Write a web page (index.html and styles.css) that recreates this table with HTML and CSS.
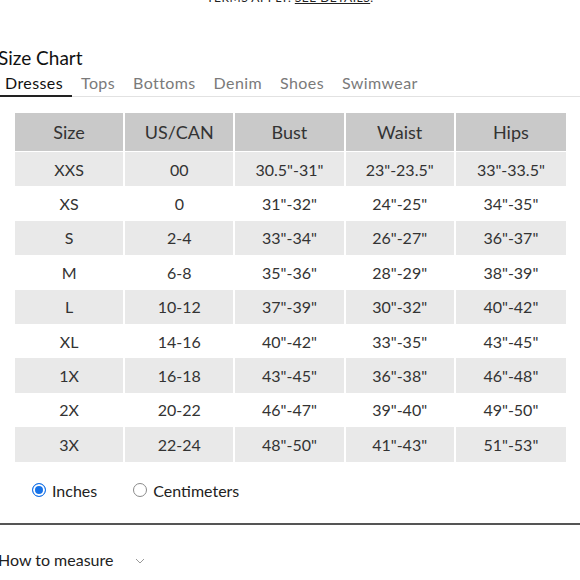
FILE: index.html
```html
<!DOCTYPE html>
<html>
<head>
<meta charset="utf-8">
<link rel="stylesheet" href="styles.css">
</head>
<body>
<div class="notice">TERMS APPLY. <a class="notice-link">SEE DETAILS</a>.</div>
<section class="chart">
  <h2 class="title">Size Chart</h2>
  <nav class="tabs">
    <span class="tab active">Dresses</span>
    <span class="tab">Tops</span>
    <span class="tab">Bottoms</span>
    <span class="tab">Denim</span>
    <span class="tab">Shoes</span>
    <span class="tab">Swimwear</span>
  </nav>
  <table class="sizes">
    <thead>
      <tr><th>Size</th><th>US/CAN</th><th>Bust</th><th>Waist</th><th>Hips</th></tr>
    </thead>
    <tbody>
      <tr><td>XXS</td><td>00</td><td>30.5"-31"</td><td>23"-23.5"</td><td>33"-33.5"</td></tr>
      <tr><td>XS</td><td>0</td><td>31"-32"</td><td>24"-25"</td><td>34"-35"</td></tr>
      <tr><td>S</td><td>2-4</td><td>33"-34"</td><td>26"-27"</td><td>36"-37"</td></tr>
      <tr><td>M</td><td>6-8</td><td>35"-36"</td><td>28"-29"</td><td>38"-39"</td></tr>
      <tr><td>L</td><td>10-12</td><td>37"-39"</td><td>30"-32"</td><td>40"-42"</td></tr>
      <tr><td>XL</td><td>14-16</td><td>40"-42"</td><td>33"-35"</td><td>43"-45"</td></tr>
      <tr><td>1X</td><td>16-18</td><td>43"-45"</td><td>36"-38"</td><td>46"-48"</td></tr>
      <tr><td>2X</td><td>20-22</td><td>46"-47"</td><td>39"-40"</td><td>49"-50"</td></tr>
      <tr><td>3X</td><td>22-24</td><td>48"-50"</td><td>41"-43"</td><td>51"-53"</td></tr>
    </tbody>
  </table>
  <div class="units">
    <label class="unit"><span class="radio checked"></span>Inches</label>
    <label class="unit"><span class="radio"></span>Centimeters</label>
  </div>
</section>
<hr class="divider">
<div class="measure">How to measure <span class="chev"><svg width="10" height="6" viewBox="0 0 10 6"><path d="M1 1 L5 5 L9 1" fill="none" stroke="#999" stroke-width="1"/></svg></span></div>
</body>
</html>
```
FILE: styles.css
```css
html, body {
  margin: 0;
  padding: 0;
  background: #fff;
}
body {
  font-family: Lato, "Noto Sans", sans-serif;
  color: #222;
  width: 580px;
  overflow: hidden;
}
.notice {
  text-align: center;
  font-size: 12px;
  line-height: 12px;
  letter-spacing: 0.5px;
  margin-top: -8px;
  color: #222;
}
.notice-link {
  text-decoration: underline;
}
.chart {
  margin-left: -2px;
}
.title {
  margin: 42px 0 0 0;
  font-size: 19px;
  font-weight: 400;
  line-height: 24px;
  color: #111;
}
.tabs {
  display: flex;
  margin-top: 3px;
  border-bottom: 1px solid #e2e2e2;
  width: 582px;
}
.tab {
  font-size: 16px;
  line-height: 20px;
  color: #7a7a7a;
  padding: 0 9px 2px 9px;
  letter-spacing: 0.4px;
}
.tab:first-child {
  padding-left: 7px;
}
.tab.active {
  color: #111;
  border-bottom: 2px solid #222;
  margin-bottom: -1px;
}
.sizes {
  margin: 16px 0 0 17px;
  border-collapse: separate;
  border-spacing: 0;
  table-layout: fixed;
  width: 551px;
}
.sizes th, .sizes td {
  text-align: center;
  border-right: 2px solid #fff;
  padding: 0;
  color: #333;
}
.sizes th:last-child, .sizes td:last-child {
  border-right: none;
}
.sizes th {
  background: #c9c9c9;
  font-size: 18px;
  font-weight: 400;
  height: 38px;
  border-bottom: 1px solid #fff;
}
.sizes td {
  font-size: 16px;
  height: 34.4px;
}
.sizes tbody tr:nth-child(odd) td {
  background: #e9e9e9;
}
.units {
  display: flex;
  align-items: center;
  margin: 19px 0 0 34px;
  gap: 36px;
}
.unit {
  display: flex;
  align-items: center;
  gap: 6px;
  font-size: 16px;
  color: #222;
}
.radio {
  width: 14px;
  height: 14px;
  border-radius: 50%;
  border: 1px solid #8a8a8a;
  box-sizing: border-box;
  background: #fff;
}
.radio.checked {
  border: 1.5px solid #1672e8;
  background: #1672e8;
  box-shadow: inset 0 0 0 2px #fff;
}
.divider {
  margin: 23px 0 0 0;
  border: none;
  height: 2px;
  background: #555;
}
.measure {
  margin: 25px 0 0 -2px;
  font-size: 16px;
  color: #222;
  display: flex;
  align-items: center;
}
.chev {
  margin-left: 22px;
  display: inline-flex;
  margin-top: 3px;
}
```
